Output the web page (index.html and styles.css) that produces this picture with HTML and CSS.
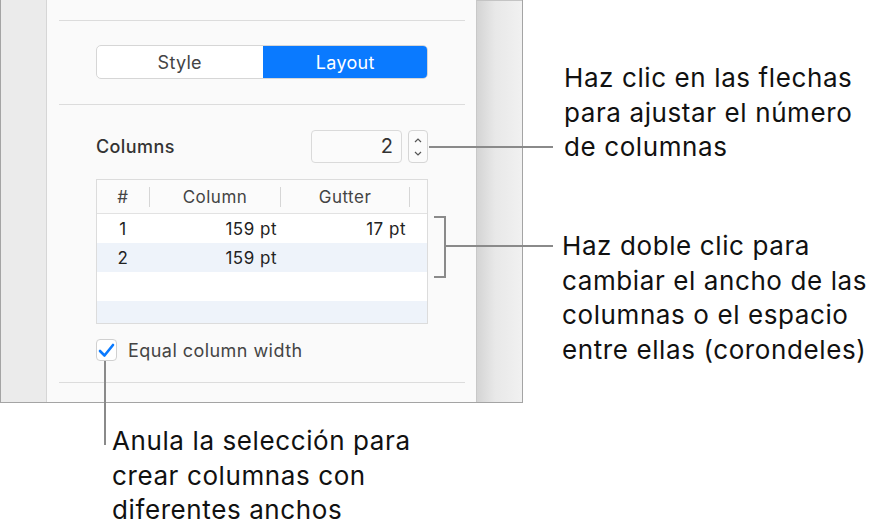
FILE: index.html
```html
<!DOCTYPE html>
<html lang="es">
<head>
	<meta charset="UTF-8">
	<title>Columnas</title>
	<link rel="stylesheet" href="styles.css">
</head>
<body>
	<div class="stage">
		<div class="panel">
			<div class="side"></div>
			<div class="inspector">
				<div class="sep"></div>
				<div class="block">
					<div class="seg">
						<span class="seg-item">Style</span>
						<span class="seg-item on">Layout</span>
					</div>
				</div>
				<div class="sep"></div>
				<div class="block cols">
					<div class="cols-row">
						<span class="label">Columns</span>
						<div class="num">2</div>
						<div class="stepper">
							<svg width="12" height="28" viewBox="0 0 12 28">
								<path d="M3 9 L6 6 L9 9" fill="none" stroke="#555" stroke-width="1.2"/>
								<path d="M3 19 L6 22 L9 19" fill="none" stroke="#555" stroke-width="1.2"/>
							</svg>
						</div>
					</div>
					<div class="table">
						<div class="thead">
							<span class="th c1">#</span>
							<span class="th c2">Column</span>
							<span class="th c3">Gutter</span>
						</div>
						<div class="tr">
							<span class="td c1">1</span>
							<span class="td c2">159 pt</span>
							<span class="td c3">17 pt</span>
						</div>
						<div class="tr alt">
							<span class="td c1">2</span>
							<span class="td c2">159 pt</span>
							<span class="td c3"></span>
						</div>
						<div class="tr"></div>
						<div class="tr alt last"></div>
					</div>
					<div class="check">
						<span class="box">
							<svg width="19" height="19" viewBox="0 0 19 19">
								<path d="M3 10 L7.5 14.5 L16 4" fill="none" stroke="#0a7aff" stroke-width="2.6" stroke-linecap="round" stroke-linejoin="round"/>
							</svg>
						</span>
						<span class="check-text">Equal column width</span>
					</div>
				</div>
				<div class="sep"></div>
			</div>
			<div class="shade"></div>
		</div>

		<!-- callouts -->
		<div class="line h" style="left:429px;top:146px;width:124px"></div>
		<div class="bracket"></div>
		<div class="line h" style="left:446px;top:245px;width:107px"></div>
		<div class="line v" style="left:104px;top:361px;height:84px"></div>

		<p class="note n1">Haz clic en las flechas<br>para ajustar el número<br>de columnas</p>
		<p class="note n2">Haz doble clic para<br>cambiar el ancho de las<br>columnas o el espacio<br>entre ellas (corondeles)</p>
		<p class="note n3">Anula la selección para<br>crear columnas con<br>diferentes anchos</p>
	</div>
</body>
</html>
```

FILE: styles.css
```css
html,body,div,p,span {
	margin: 0;
	padding: 0;
}
body {
	background: #fff;
	font-family: Inter, "Helvetica Neue", "Liberation Sans", sans-serif;
	color: #111;
}
.stage {
	position: relative;
	width: 872px;
	height: 532px;
}
.panel {
	display: flex;
	width: 523px;
	height: 403px;
	box-sizing: border-box;
	border: 1px solid #a4a4a4;
	border-top: none;
}
.side {
	width: 45px;
	background: #ebebeb;
	border-right: 1px solid #d6d6d6;
}
.inspector {
	flex: 1;
	background: #fafafa;
	padding: 20px 11px 0 12px;
	display: flex;
	flex-direction: column;
}
.shade {
	width: 45px;
	background: linear-gradient(to right, #d4d4d4, #e8e8e8 40%, #f1f1f1);
	border-left: 1px solid #c8c8c8;
	border-top: 1px solid #c4c4c4;
}
.sep {
	height: 1px;
	background: #dcdcdc;
}
.block {
	padding: 0 37px;
}

/* segmented control */
.seg {
	display: flex;
	height: 34px;
	margin: 24px 0 25px;
	border: 1px solid #d6d6d6;
	border-radius: 5px;
	overflow: hidden;
	background: #fff;
	box-sizing: border-box;
}
.seg-item {
	flex: 1;
	display: flex;
	align-items: center;
	justify-content: center;
	font-size: 18px;
	letter-spacing: 0.3px;
	color: #444;
}
.seg-item.on {
	background: #0a7aff;
	color: #fff;
	margin: -1px -1px -1px 0;
}

/* columns */
.cols {
	padding-top: 25px;
	padding-bottom: 21px;
}
.cols-row {
	display: flex;
	align-items: center;
	height: 33px;
}
.label {
	flex: 1;
	font-size: 18px;
	letter-spacing: 0.4px;
	font-weight: 500;
	color: #333;
}
.num {
	width: 91px;
	height: 33px;
	box-sizing: border-box;
	border: 1px solid #dadada;
	border-radius: 4px;
	background: #fbfbfb;
	font-size: 20px;
	color: #333;
	text-align: right;
	padding-right: 8px;
	line-height: 31px;
}
.stepper {
	width: 20px;
	height: 33px;
	margin-left: 6px;
	box-sizing: border-box;
	border: 1px solid #d6d6d6;
	border-radius: 4px;
	display: flex;
	align-items: center;
	justify-content: center;
	background: #fbfbfb;
}

/* table */
.table {
	margin-top: 16px;
	width: 332px;
	border: 1px solid #dcdcdc;
	box-sizing: border-box;
	background: #fff;
}
.thead {
	display: flex;
	align-items: center;
	height: 33px;
	background: #fbfbfb;
	border-bottom: 1px solid #e2e2e2;
	font-size: 17px;
	letter-spacing: 0.5px;
	color: #444;
}
.th {
	height: 20px;
	line-height: 20px;
	text-align: center;
	border-right: 1px solid #d6d6d6;
	box-sizing: border-box;
}
.tr {
	display: flex;
	align-items: center;
	height: 29px;
	font-size: 17px;
	letter-spacing: 0.5px;
	color: #222;
}
.tr.alt {
	background: #eef3fa;
}
.tr.last {
	height: 22px;
}
.c1 {
	width: 53px;
}
.c2 {
	width: 131px;
}
.c3 {
	width: 129px;
}
.td {
	box-sizing: border-box;
}
.td.c1 {
	text-align: center;
	padding-right: 1px;
}
.td.c2,
.td.c3 {
	text-align: right;
	padding-right: 4px;
}

/* checkbox */
.check {
	display: flex;
	align-items: center;
	margin-top: 15px;
}
.box {
	width: 21px;
	height: 22px;
	box-sizing: border-box;
	border: 1px solid #d0d0d0;
	border-radius: 4px;
	background: #fff;
	display: flex;
	align-items: center;
	justify-content: center;
}
.check-text {
	margin-left: 11px;
	font-size: 18px;
	letter-spacing: 0.45px;
	color: #444;
}

/* callouts */
.line {
	position: absolute;
	background: #8a8a8a;
}
.line.h {
	height: 2px;
}
.line.v {
	width: 2px;
}
.bracket {
	position: absolute;
	left: 434px;
	top: 216px;
	width: 10px;
	height: 58px;
	border: 2px solid #8a8a8a;
	border-left: none;
}
.note {
	position: absolute;
	font-size: 26px;
	letter-spacing: 0.6px;
	line-height: 34.5px;
	color: #111;
	white-space: nowrap;
}
.n1 {
	left: 564px;
	top: 61px;
}
.n2 {
	left: 562px;
	top: 229px;
}
.n3 {
	left: 112px;
	top: 424px;
}
```
